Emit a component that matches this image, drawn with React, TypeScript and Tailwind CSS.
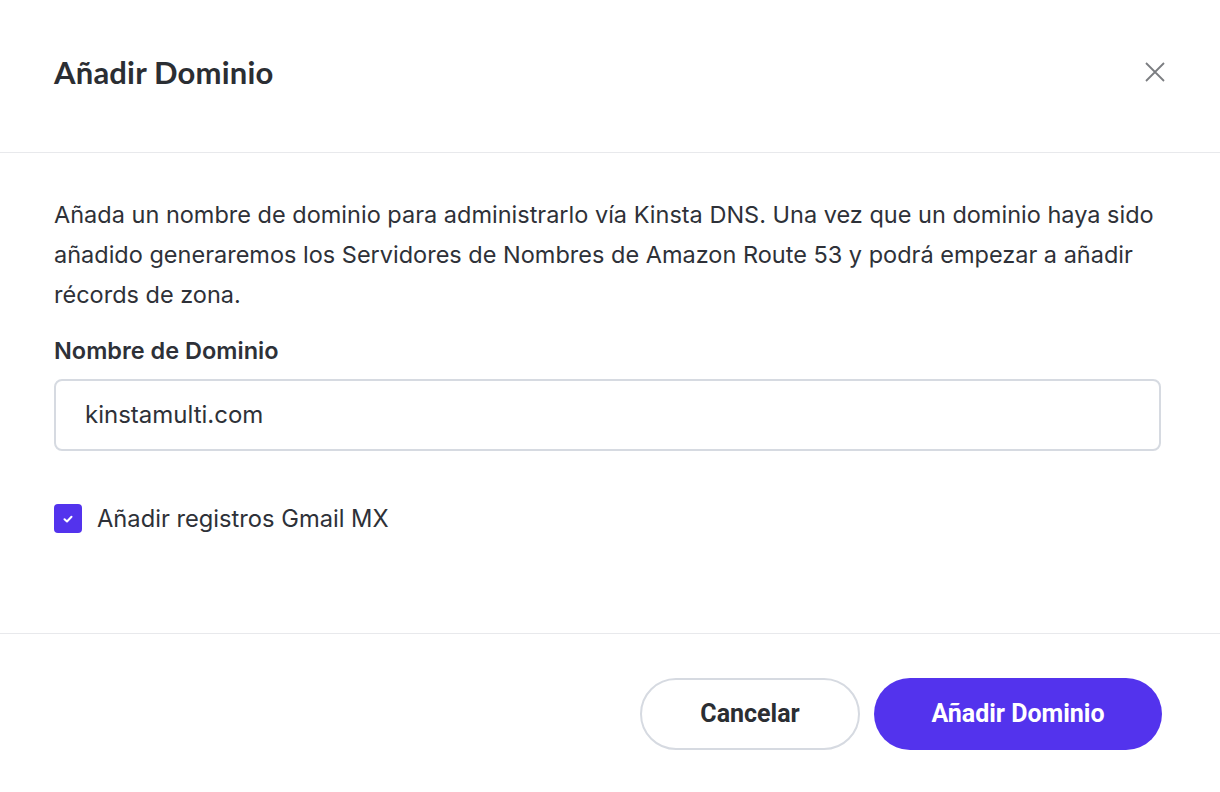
import React from 'react';

const App: React.FC = () => {
  return (
    <div className="w-[1220px] h-[792px] bg-white text-[#2e3138] font-['Inter',sans-serif] flex flex-col">
      {/* Header */}
      <div className="h-[153px] flex items-center justify-between pl-[54px] pr-[54px] border-b border-[#e8e9ec] pb-[8px]">
        <h1 className="font-['Lato',sans-serif] font-bold text-[31px] tracking-[0.2px] text-[#2b2e33]">Añadir Dominio</h1>
        <button className="text-[#7b7d81]">
          <svg width="22" height="22" viewBox="0 0 22 22" fill="none" stroke="currentColor" strokeWidth="1.8">
            <path d="M2 2L20 20M20 2L2 20" />
          </svg>
        </button>
      </div>

      {/* Body */}
      <div className="flex-1 pl-[54px] pr-[59px] pt-[42px] border-b border-[#e8e9ec]">
        <p className="text-[23.5px] leading-[40px] text-[#2e3138]">
          Añada un nombre de dominio para administrarlo vía Kinsta DNS. Una vez que un dominio haya sido añadido generaremos los Servidores de Nombres de Amazon Route 53 y podrá empezar a añadir récords de zona.
        </p>
        <label className="block mt-[20px] text-[23.5px] leading-[32px] font-semibold">Nombre de Dominio</label>
        <div className="mt-[12px] h-[72px] rounded-[8px] border-2 border-[#d6dae1] flex items-center px-[29px] text-[24px]">
          kinstamulti.com
        </div>
        <div className="mt-[50px] flex items-center gap-[15px]">
          <span className="w-[28px] h-[29px] rounded-[4px] bg-[#5333ed] flex items-center justify-center">
            <svg width="12" height="12" viewBox="0 0 12 12" fill="none" stroke="white" strokeWidth="2" strokeLinecap="round" strokeLinejoin="round">
              <path d="M2.5 6.2L5 8.5L9.5 3.8" />
            </svg>
          </span>
          <span className="text-[23.7px]">Añadir registros Gmail MX</span>
        </div>
      </div>

      {/* Footer */}
      <div className="h-[158px] flex items-start justify-end gap-[14px] pr-[58px] pt-[44px]">
        <button className="w-[220px] h-[72px] rounded-full border-2 border-[#d6dae1] bg-white font-['Roboto',sans-serif] font-bold text-[25px] text-[#2b2e33]">
          Cancelar
        </button>
        <button className="w-[288px] h-[72px] rounded-full bg-[#5333ed] font-['Roboto',sans-serif] font-bold text-[25px] text-white">
          Añadir Dominio
        </button>
      </div>
    </div>
  );
};

export default App;
